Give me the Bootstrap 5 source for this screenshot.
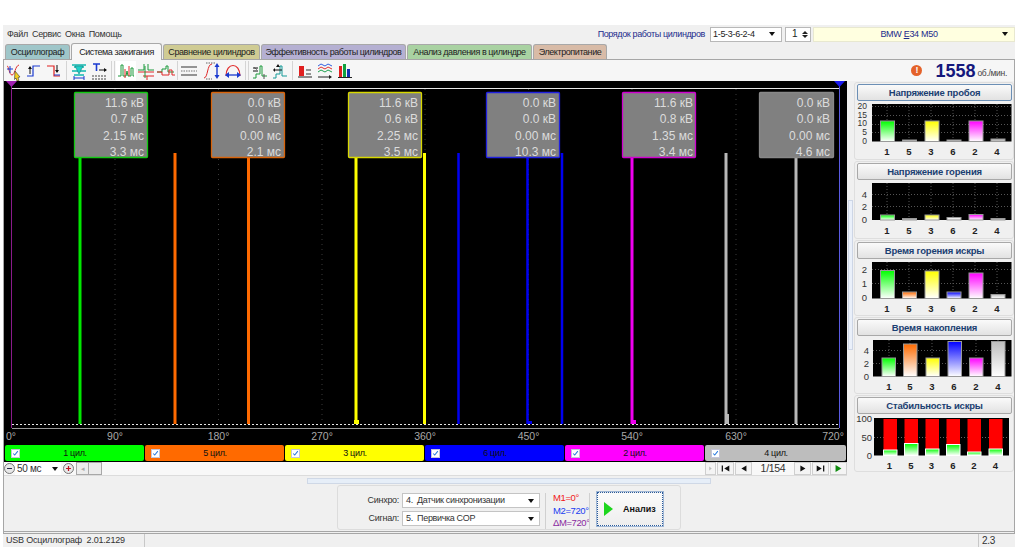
<!DOCTYPE html>
<html lang="ru">
<head>
<meta charset="utf-8">
<title>USB Осциллограф</title>
<link href="https://cdn.jsdelivr.net/npm/bootstrap@5.3.0/dist/css/bootstrap.min.css" rel="stylesheet">
<style>
html,body{height:551px;overflow:hidden;background:#fff}
body{font-family:"Liberation Sans",Arial,sans-serif;font-size:9px;letter-spacing:-.3px;line-height:1;color:#333;padding:25px 9px 0 3px}
.app{width:1012px;height:522px;background:#f0f0f0}
.menu-row{height:18px;padding-left:4px}
.menu-row .mi{margin-right:4px;color:#333}
.order-label{color:#1c2c8c;margin-right:5px;letter-spacing:-.38px}
.sel{height:15px;background:#fff;border:1px solid #b8b8b8;color:#222;padding:0 2px;position:relative}
.tri{width:0;height:0;border-left:3.5px solid transparent;border-right:3.5px solid transparent;border-top:4px solid #111;flex:none}
.w-order{width:72px;margin-right:3px}
.w-spin{width:26px;margin-right:2px;padding-left:6px;font-size:10px}
.w-car{width:202px;background:#ffffe0;border-color:#e8e8d0;color:#1c2c8c}
.spin-arrows{line-height:0;gap:1px}
.up{width:0;height:0;border-left:3px solid transparent;border-right:3px solid transparent;border-bottom:3px solid #222}
.dn{width:0;height:0;border-left:3px solid transparent;border-right:3px solid transparent;border-top:3px solid #222}
.tabs{height:16px;padding-left:2px;gap:1px;align-items:flex-end}
.tabx{height:15px;border:1px solid #a8a8a8;border-bottom:0;border-radius:3px 3px 0 0;color:#222;padding-top:3px;text-align:center;white-space:nowrap;letter-spacing:-.42px}
.t1{width:65px;background:#9fc6c9}.t2{width:91px;height:17px;background:#f7f7f7;padding-top:4px;margin-bottom:-1px;position:relative;z-index:2}
.t3{width:97px;background:#cfcb93}.t4{width:145px;background:#b5b0d2}.t5{width:125px;background:#a9d2a2}.t6{width:74px;background:#d8bba7}
.frame{width:1012px;height:475px;border:1px solid #a6a6a6;border-bottom:3px double #a6a6a6;background:#f0f0f0}
.toolbar{height:21px;background:#f6f6f6}
.tb{width:20px;height:20px;flex:none;display:block}
.tb.on{background:#fff}
.sepa{width:5px;height:19px;flex:none;display:flex;justify-content:center;gap:2px}
.sepa i{width:1px;height:19px;background:#d4d4d4;display:block}
.sepw{width:7px}.sepn{width:3px}
.rpm-mark{width:11px;height:11px;border-radius:50%;background:#e4622a;color:#fff;font-weight:700;font-size:9px;text-align:center;line-height:11px;margin-right:13px}
.rpm-val{font-size:18px;letter-spacing:0;font-weight:700;color:#14187c;margin-right:2px}
.rpm-unit{font-size:8.5px;color:#444;margin-right:7px;padding-top:5px}
.left-col{width:843px;flex:none}
.scope{display:block;width:843px;height:364px;background:#000}
.legend{height:17px;background:#000;padding:0 1px;gap:1px}
.leg{height:16px;border-radius:2px;color:#111;padding-left:6px;align-items:center}
.leg-name{flex:1;text-align:center;padding-right:14px}
.chk{width:9px;height:9px;background:#fff;border:1px solid #c4c4d8;flex:none;display:block}
.c-g{background:#00ff00;width:139px}.c-o{background:#ff6a00;width:139px}.c-y{background:#ffff00;width:139px}
.c-b{background:#0000ff;width:139px}.c-m{background:#ff00ff;width:139px}.c-a{background:#bdbdbd;width:141px}
.ctrl{height:14px;background:#f8f8f8;border-bottom:1px solid #dcdcdc}
.rnd{width:11px;height:11px;border-radius:50%;border:1px solid #777;background:#e8e8e8;display:block;flex:none}
.sel50{width:46px;height:13px;background:#fff;padding:0 3px 0 2px;font-size:10px;margin:0 2px 0 0;color:#333}
.scr{width:26px;height:13px;border:1px solid #a8a8a8;background:#ececec;margin-left:2px}
.scr b{width:12px;border-right:1px solid #a8a8a8;color:#aaa;font-size:7px;font-weight:400;text-align:center;line-height:11px}
.navb{height:13px;width:17px;background:#f4f4f4;border:1px solid #cfcfcf;flex:none;display:block}
.page-no{width:41px;text-align:center;font-size:10.5px;color:#333}
.vsplit{width:5px;height:150px;margin-top:119px;background:#eaf0fa;border:1px solid #cdd6e6;flex:none;margin-left:1px}
.right-col{width:160px;flex:none;margin-left:1px;padding-top:1px}
.gpanel{border:1px solid #dedede;border-radius:3px;padding:1px 1px 0 1px;margin-bottom:1px}
.gbtn{display:block;width:155px;height:17px;margin-left:1px;background:linear-gradient(#fafafa,#e2e2e2);border:1px solid #a8a8a8;border-radius:2px;color:#1b3f72;font-weight:700;font-size:9.5px;letter-spacing:-.2px;text-align:center;line-height:15px}
.gbtn.act{border-color:#6b8fb5}
.gpanel svg{display:block;width:156px}
.gpanel text{letter-spacing:0}
.lower{height:55px}
.hsplit{width:404px;height:6px;margin:2px 0 1px 303px;background:#e6eef8;border:1px solid #cfd8e6}
.box{width:344px;height:45px;margin-left:333px;border:1px solid #dcdcdc;border-radius:3px;padding:7px 0 0 0}
.lbls{width:64px;text-align:right;padding-right:3px;gap:3px;color:#333}
.lbls span{height:15px;line-height:15px}
.sels{width:138px;gap:3px}
.sel2{height:15px;background:#fff;border:1px solid #c4c4c4;padding:0 5px 0 3px;color:#333;letter-spacing:-.35px}
.vs{width:1px;height:36px;background:#d0d0d0;margin:0 7px 0 5px;flex:none}
.marks{width:36px;font-size:9.5px;letter-spacing:-.4px;gap:3px;line-height:9.5px;padding-top:0}
.mk1{color:#f01818}.mk2{color:#1a3cf0}.mk3{color:#8a2aa0}
.an{width:66px;height:34px;margin-left:7px;margin-top:-1px;border:1px dotted #2a5a9a;outline:1px solid #9fb6d4;background:linear-gradient(#fbfbfb,#eeeeee);font-weight:700;font-size:9px;letter-spacing:0;color:#111;padding-left:6px;gap:10px}
.tri-go{width:0;height:0;border-left:9px solid #1ed61e;border-top:7px solid transparent;border-bottom:7px solid transparent;flex:none}
.status{height:13px;color:#333}
.st1{width:141px;padding-left:3px;letter-spacing:-.2px}.st2{width:835px;border-left:1px solid #c8c8c8;border-right:1px solid #c8c8c8;height:13px}.st3{padding-left:3px;font-size:10px}
</style>
</head>
<body>
<div class="app">
  <div class="menu-row d-flex align-items-center">
    <span class="mi">Файл</span><span class="mi">Сервис</span><span class="mi">Окна</span><span class="mi">Помощь</span>
    <div class="ms-auto d-flex align-items-center">
      <span class="order-label">Порядок работы цилиндров</span>
      <div class="sel w-order d-flex align-items-center justify-content-between"><span>1-5-3-6-2-4</span><i class="tri me-1"></i></div>
      <div class="sel w-spin d-flex align-items-center justify-content-between"><span>1</span><span class="spin-arrows d-flex flex-column"><i class="up"></i><i class="dn"></i></span></div>
      <div class="sel w-car d-flex align-items-center justify-content-between"><span class="flex-grow-1 text-center">BMW <u>E</u>34 M50</span><i class="tri me-1"></i></div>
    </div>
  </div>
  <div class="tabs d-flex">
    <div class="tabx t1">Осциллограф</div><div class="tabx t2">Система зажигания</div><div class="tabx t3">Сравнение цилиндров</div><div class="tabx t4">Эффективность работы цилиндров</div><div class="tabx t5">Анализ давления в цилиндре</div><div class="tabx t6">Электропитание</div>
  </div>
  <div class="frame">
    <div class="toolbar d-flex align-items-center">
      <svg class="tb" viewBox="0 0 20 20" fill="none"><path d="M3 5c2 0 2 9 5 9s3-9 7-10" stroke="#e03030"/><path d="M3 8h6M6 5v7" stroke="#1a3ad0"/><path d="M11 10l5 6-2 .5 1 3-2 .5-1-3-1.500 1.500z" fill="#f4d020" stroke="#333" stroke-width=".6"/></svg>
      <svg class="tb" viewBox="0 0 20 20" fill="none"><path d="M3 15h6V5h7" stroke="#1a3ad0" stroke-width="1.200"/><path d="M6 6v7" stroke="#111"/><path d="M4 8l2-3 2 3z" fill="#111"/></svg>
      <svg class="tb" viewBox="0 0 20 20" fill="none"><path d="M3 5h7v10h6" stroke="#e02020" stroke-width="1.200"/><path d="M13 4v7" stroke="#111"/><path d="M11 9l2 3 2-3z" fill="#111"/><path d="M10 14h6" stroke="#1a3ad0"/></svg>
      <div class="sepa"><i></i></div>
      <svg class="tb" viewBox="0 0 20 20" fill="none"><path d="M3 4h14M5 6h10M3 10h14M5 14h10" stroke="#10b8b0" stroke-width="1.300"/><path d="M6 5l4 8 4-8z" fill="#20d0c8" stroke="#108080" stroke-width=".6"/><path d="M5 17h10M5 15v4M15 15v4" stroke="#1a3ad0"/></svg>
      <svg class="tb" viewBox="0 0 20 20" fill="none"><path d="M4 3h7M7.500 3v7" stroke="#1a3ad0" stroke-width="1.600"/><path d="M10 9h7" stroke="#111"/><path d="M15 7l3 2-3 2z" fill="#111"/><path d="M3 15h14M3 18h14" stroke="#444" stroke-dasharray="2 1"/></svg>
      <div class="sepa sepw"><i></i><i></i></div>
      <svg class="tb on" viewBox="0 0 20 20" fill="none"><path d="M2 15h3V4h2v11h3l1-5 1 5h3V7h2v8h1" stroke="#1d9a3c"/><path d="M9 8v9M13 5v10" stroke="#e02828"/></svg>
      <svg class="tb" viewBox="0 0 20 20" fill="none"><path d="M2 9h6V3M12 3v6h6" stroke="#1d9a3c"/><path d="M2 11h16" stroke="#e02828"/><path d="M7 15h4v4M11 15h7" stroke="#e02828"/><path d="M9 5v12" stroke="#1d9a3c"/></svg>
      <svg class="tb" viewBox="0 0 20 20" fill="none"><path d="M1 11h5V8h4V5h2v6h6" stroke="#1d9a3c"/><path d="M1 11h5v3h7V9h3v5h3" stroke="#e02828"/></svg>
      <div class="sepa sepn"><i></i></div>
      <svg class="tb" viewBox="0 0 20 20" fill="none"><path d="M2 6h16M2 14h16" stroke="#333"/><path d="M2 10h16" stroke="#777" stroke-dasharray="1.500 1"/></svg>
      <svg class="tb ms-1" viewBox="0 0 20 20" fill="none"><path d="M1 17c4 0 3-14 8-14" stroke="#e02828"/><path d="M3 2h10M3 18h6" stroke="#666" stroke-dasharray="1.500 1"/><path d="M14 4v12" stroke="#1a3ad0" stroke-width="1.400"/><path d="M11.500 6L14 2l2.500 4zM11.500 14l2.500 4 2.500-4z" fill="#1a3ad0"/></svg>
      <svg class="tb" viewBox="0 0 20 20" fill="none"><path d="M3 15c0-14 14-14 14 0" stroke="#e02828" stroke-width="1.200"/><path d="M4 14h12" stroke="#1a3ad0" stroke-width="1.300"/><path d="M6 11l-4 3 4 3zM14 11l4 3-4 3z" fill="#1a3ad0"/></svg>
      <div class="sepa sepw"><i></i><i></i></div>
      <svg class="tb" viewBox="0 0 20 20" fill="none"><path d="M3 17h3v-4h4V5h2v10h5" stroke="#1d9a3c"/><path d="M3 7h5M3 10h5" stroke="#111"/><path d="M7 8.500l-3-2M14 13v5" stroke="#555"/></svg>
      <svg class="tb" viewBox="0 0 20 20" fill="none"><path d="M3 17h3v-4h4V5h2v10h5" stroke="#159a98"/><path d="M5 9h7" stroke="#111"/><path d="M8 3l2 3H6zM5 7l-2 2 2 2z" fill="#111"/></svg>
      <div class="sepa"><i></i></div>
      <svg class="tb" viewBox="0 0 20 20"><rect x="4" y="5" width="5" height="10" fill="#e02020"/><path d="M3 16h14" stroke="#222"/><path d="M11 9h5M11 13h5" stroke="#333"/></svg>
      <svg class="tb" viewBox="0 0 20 20" fill="none"><path d="M3 5l3-2 4 2 3-2 4 2" stroke="#3060e0"/><path d="M3 8l3-2 4 2 3-2 4 2" stroke="#e03030"/><path d="M3 11l3-2 4 2 3-2 4 2" stroke="#20a050"/><path d="M3 16h13" stroke="#222"/><path d="M14 14l3 2-3 2z" fill="#222"/></svg>
      <svg class="tb" viewBox="0 0 20 20"><rect x="4" y="5" width="3" height="11" fill="#e02020"/><rect x="8" y="3" width="3" height="13" fill="#10a040"/><rect x="12" y="8" width="3" height="8" fill="#1030b0"/><path d="M3 16.500h14" stroke="#222"/></svg>
      <div class="ms-auto d-flex align-items-center">
        <span class="rpm-mark">!</span><span class="rpm-val">1558</span><span class="rpm-unit">об./мин.</span>
      </div>
    </div>
    <div class="d-flex" style="height:395px">
      <div class="left-col">
        <svg class="scope" viewBox="4 81 843 364" font-family="'Liberation Sans',Arial,sans-serif" letter-spacing="0">
          <g stroke="#3a3a3a" stroke-dasharray="1 4"><path d="M115 89V424M218.500 89V424M322 89V424M425 89V424M528.500 89V424M632 89V424M736 89V424"/></g>
          <path d="M12 88.500H839" stroke="#e8e8e8"/>
          <path d="M12 424.500H839" stroke="#e8e8e8" stroke-dasharray="2 2"/>
          <path d="M12 428.500H839" stroke="#9a9a9a"/>
          <path d="M11.500 84V428" stroke="#8a1a8a"/>
          <path d="M839.500 84V428" stroke="#5a5ae0"/>
          <path d="M6 81H17L11.500 87Z" fill="#a020b0"/>
          <path d="M834 81H845L839.500 87Z" fill="#1a1af0"/>
          <g stroke-width="3">
            <path d="M80 158V424" stroke="#00e600"/>
            <path d="M175 153V424M248.500 158V424" stroke="#ff6a00"/>
            <path d="M356 158V424M424.500 153V424" stroke="#ffff00"/>
            <path d="M458.500 153V424M527.500 158V424M562 153V424" stroke="#0000f0" stroke-width="2.500"/>
            <path d="M632 158V424" stroke="#f000f0"/>
            <path d="M726 153V424M796 158V424" stroke="#b8b8b8"/>
          </g>
          <path d="M631 420h5v4h-5z" fill="#f000f0"/><path d="M354 420h5v4h-5z" fill="#ffff00"/><path d="M527 421h5v3h-5z" fill="#0000f0"/><path d="M726 414h3v10h-3z" fill="#b8b8b8"/>
          <g stroke-width="1.300" fill="#808080">
            <rect x="74.500" y="92.500" width="73" height="65" rx="1" stroke="#12c812"/>
            <rect x="211.500" y="92.500" width="73" height="65" rx="1" stroke="#d8640c"/>
            <rect x="348.500" y="92.500" width="73" height="65" rx="1" stroke="#d8d800"/>
            <rect x="486.500" y="92.500" width="73" height="65" rx="1" stroke="#2020e0"/>
            <rect x="622.500" y="92.500" width="73" height="65" rx="1" stroke="#d000d0"/>
            <rect x="759.500" y="92.500" width="74" height="65" rx="1" stroke="#888"/>
          </g>
          <g fill="#dcdcdc" font-size="12" text-anchor="end">
            <text x="144" y="107">11.6 кВ</text><text x="144" y="123">0.7 кВ</text><text x="144" y="140">2.15 мс</text><text x="144" y="156">3.3 мс</text>
            <text x="281" y="107">0.0 кВ</text><text x="281" y="123">0.0 кВ</text><text x="281" y="140">0.00 мс</text><text x="281" y="156">2.1 мс</text>
            <text x="418" y="107">11.6 кВ</text><text x="418" y="123">0.6 кВ</text><text x="418" y="140">2.25 мс</text><text x="418" y="156">3.5 мс</text>
            <text x="556" y="107">0.0 кВ</text><text x="556" y="123">0.0 кВ</text><text x="556" y="140">0.00 мс</text><text x="556" y="156">10.3 мс</text>
            <text x="693" y="107">11.6 кВ</text><text x="693" y="123">0.8 кВ</text><text x="693" y="140">1.35 мс</text><text x="693" y="156">3.4 мс</text>
            <text x="830" y="107">0.0 кВ</text><text x="830" y="123">0.0 кВ</text><text x="830" y="140">0.00 мс</text><text x="830" y="156">4.6 мс</text>
          </g>
          <g fill="#a8a8a8" font-size="10.500" text-anchor="middle">
            <text x="11" y="440">0°</text><text x="115" y="440">90°</text><text x="218.500" y="440">180°</text><text x="322" y="440">270°</text><text x="425" y="440">360°</text><text x="528.500" y="440">450°</text><text x="632" y="440">540°</text><text x="736" y="440">630°</text><text x="833" y="440">720°</text>
          </g>
        </svg>
        <div class="legend d-flex">
          <div class="leg c-g d-flex"><svg class="chk" viewBox="0 0 9 9" fill="none"><path d="M1.500 4.500l2 2 4-5" stroke="#2a7ae0" stroke-width="1.300"/></svg><span class="leg-name">1 цил.</span></div>
          <div class="leg c-o d-flex"><svg class="chk" viewBox="0 0 9 9" fill="none"><path d="M1.500 4.500l2 2 4-5" stroke="#2a7ae0" stroke-width="1.300"/></svg><span class="leg-name">5 цил.</span></div>
          <div class="leg c-y d-flex"><svg class="chk" viewBox="0 0 9 9" fill="none"><path d="M1.500 4.500l2 2 4-5" stroke="#2a7ae0" stroke-width="1.300"/></svg><span class="leg-name">3 цил.</span></div>
          <div class="leg c-b d-flex"><svg class="chk" viewBox="0 0 9 9" fill="none"><path d="M1.500 4.500l2 2 4-5" stroke="#2a7ae0" stroke-width="1.300"/></svg><span class="leg-name">6 цил.</span></div>
          <div class="leg c-m d-flex"><svg class="chk" viewBox="0 0 9 9" fill="none"><path d="M1.500 4.500l2 2 4-5" stroke="#2a7ae0" stroke-width="1.300"/></svg><span class="leg-name">2 цил.</span></div>
          <div class="leg c-a d-flex"><svg class="chk" viewBox="0 0 9 9" fill="none"><path d="M1.500 4.500l2 2 4-5" stroke="#2a7ae0" stroke-width="1.300"/></svg><span class="leg-name">4 цил.</span></div>
        </div>
        <div class="ctrl d-flex align-items-center">
          <svg class="rnd" viewBox="0 0 11 11"><path d="M2.500 5.500h6" stroke="#224" stroke-width="1.500"/></svg>
          <div class="sel50 d-flex align-items-center justify-content-between"><span>50 мс</span><i class="tri"></i></div>
          <svg class="rnd" viewBox="0 0 11 11"><path d="M2.500 5.500h6M5.500 2.500v6" stroke="#c01020" stroke-width="1.500"/></svg>
          <div class="scr d-flex"><b>◂</b></div>
          <div class="ms-auto d-flex align-items-center" style="width:142px;gap:1px">
            <svg class="navb" style="width:11px" viewBox="0 0 11 13"><path d="M4 4l3 2.500-3 2.500z" fill="#bbb"/></svg>
            <svg class="navb" viewBox="0 0 17 13"><path d="M4 3h1.500v7H4zM13 3v7l-6-3.500z" fill="#111"/></svg>
            <svg class="navb" viewBox="0 0 17 13"><path d="M12 3v7l-6-3.500z" fill="#111"/></svg>
            <span class="page-no">1/154</span>
            <svg class="navb" viewBox="0 0 17 13"><path d="M6 3v7l6-3.500z" fill="#111"/></svg>
            <svg class="navb" viewBox="0 0 17 13"><path d="M4 3v7l6-3.500zM11.500 3H13v7h-1.500z" fill="#111"/></svg>
            <svg class="navb" viewBox="0 0 17 13"><path d="M5 2.500v8l7-4z" fill="#0e8a0e"/></svg>
          </div>
        </div>
      </div>
      <div class="vsplit"></div>
      <div class="right-col">
        <div class="gpanel">
          <div class="gbtn act">Напряжение пробоя</div>
          <svg viewBox="855 101 156 58" style="height:58px" font-family="'Liberation Sans',Arial,sans-serif">
            <defs>
              <linearGradient id="gg" x1="0" y1="0" x2="0" y2="1"><stop offset="0" stop-color="#00ff00"/><stop offset="1" stop-color="#fff"/></linearGradient>
              <linearGradient id="go" x1="0" y1="0" x2="0" y2="1"><stop offset="0" stop-color="#ff6a00"/><stop offset="1" stop-color="#fff"/></linearGradient>
              <linearGradient id="gy" x1="0" y1="0" x2="0" y2="1"><stop offset="0" stop-color="#ffff00"/><stop offset="1" stop-color="#fff"/></linearGradient>
              <linearGradient id="gb" x1="0" y1="0" x2="0" y2="1"><stop offset="0" stop-color="#0000ff"/><stop offset="1" stop-color="#fff"/></linearGradient>
              <linearGradient id="gm" x1="0" y1="0" x2="0" y2="1"><stop offset="0" stop-color="#ff00ff"/><stop offset="1" stop-color="#fff"/></linearGradient>
              <linearGradient id="ga" x1="0" y1="0" x2="0" y2="1"><stop offset="0" stop-color="#bdbdbd"/><stop offset="1" stop-color="#fff"/></linearGradient>
            </defs>
            <rect x="871" y="104" width="139.500" height="37.500" fill="#000"/>
            <path d="M871 106.500H1010M871 115.500H1010M871 124.500H1010M871 132.500H1010M886 104V141M908 104V141M930 104V141M952 104V141M974 104V141M996 104V141" stroke="#555" stroke-dasharray="1 2"/>
            <g stroke="#999"><rect x="879.500" y="121" width="14" height="20.500" fill="url(#gg)"/><rect x="901.500" y="140" width="14" height="1.500" fill="#bbb"/><rect x="924" y="121" width="14" height="20.500" fill="url(#gy)"/><rect x="946" y="140" width="14" height="1.500" fill="#bbb"/><rect x="968" y="121" width="14" height="20.500" fill="url(#gm)"/><rect x="990" y="139" width="14" height="2.500" fill="#bbb"/></g>
            <g fill="#333" font-size="8.500" text-anchor="end"><text x="866" y="109">20</text><text x="866" y="117.500">15</text><text x="866" y="126">10</text><text x="866" y="134.500">5</text><text x="866" y="143.500">0</text></g>
            <g fill="#222" font-size="9.500" font-weight="700" text-anchor="middle"><text x="886" y="155">1</text><text x="908" y="155">5</text><text x="930" y="155">3</text><text x="952" y="155">6</text><text x="974" y="155">2</text><text x="996" y="155">4</text></g>
          </svg>
        </div>
        <div class="gpanel">
          <div class="gbtn">Напряжение горения</div>
          <svg viewBox="855 180 156 58" style="height:58px" font-family="'Liberation Sans',Arial,sans-serif">
            <rect x="871" y="183" width="139.500" height="37" fill="#000"/>
            <path d="M871 194.500H1010M871 206.500H1010M886 183V220M908 183V220M930 183V220M952 183V220M974 183V220M996 183V220" stroke="#555" stroke-dasharray="1 2"/>
            <g stroke="#999"><rect x="879.500" y="215" width="14" height="5" fill="url(#gg)"/><rect x="901.500" y="218.500" width="14" height="1.500" fill="#bbb"/><rect x="924" y="215" width="14" height="5" fill="url(#gy)"/><rect x="946" y="217.500" width="14" height="2.500" fill="#eee"/><rect x="968" y="214.500" width="14" height="5.500" fill="url(#gm)"/><rect x="990" y="218.500" width="14" height="1.500" fill="#bbb"/></g>
            <g fill="#333" font-size="9.500" text-anchor="end"><text x="866" y="197.500">4</text><text x="866" y="210">2</text><text x="866" y="223">0</text></g>
            <g fill="#222" font-size="9.500" font-weight="700" text-anchor="middle"><text x="886" y="234">1</text><text x="908" y="234">5</text><text x="930" y="234">3</text><text x="952" y="234">6</text><text x="974" y="234">2</text><text x="996" y="234">4</text></g>
          </svg>
        </div>
        <div class="gpanel">
          <div class="gbtn">Время горения искры</div>
          <svg viewBox="855 259 156 56" style="height:56px" font-family="'Liberation Sans',Arial,sans-serif">
            <rect x="871" y="262" width="139.500" height="36.500" fill="#000"/>
            <path d="M871 269.500H1010M871 283.500H1010M886 262V298M908 262V298M930 262V298M952 262V298M974 262V298M996 262V298" stroke="#555" stroke-dasharray="1 2"/>
            <g stroke="#999"><rect x="879.500" y="270.500" width="14" height="28" fill="url(#gg)"/><rect x="901.500" y="292" width="14" height="6.500" fill="url(#go)"/><rect x="924" y="271" width="14" height="27.500" fill="url(#gy)"/><rect x="946" y="292" width="14" height="6.500" fill="url(#gb)"/><rect x="968" y="273" width="14" height="25.500" fill="url(#gm)"/><rect x="990" y="294.500" width="14" height="4" fill="url(#ga)"/></g>
            <g fill="#333" font-size="9.500" text-anchor="end"><text x="866" y="273">2</text><text x="866" y="287">1</text><text x="866" y="301">0</text></g>
            <g fill="#222" font-size="9.500" font-weight="700" text-anchor="middle"><text x="886" y="312">1</text><text x="908" y="312">5</text><text x="930" y="312">3</text><text x="952" y="312">6</text><text x="974" y="312">2</text><text x="996" y="312">4</text></g>
          </svg>
        </div>
        <div class="gpanel">
          <div class="gbtn">Время накопления</div>
          <svg viewBox="855 336 156 57" style="height:57px" font-family="'Liberation Sans',Arial,sans-serif">
            <rect x="872" y="340" width="138.500" height="36.500" fill="#000"/>
            <path d="M872 350.500H1010M872 363.500H1010M888 340V376M909 340V376M931 340V376M953 340V376M975 340V376M997 340V376" stroke="#555" stroke-dasharray="1 2"/>
            <g stroke="#999"><rect x="881" y="358" width="13.500" height="18.500" fill="url(#gg)"/><rect x="902.500" y="344" width="13.500" height="32.500" fill="url(#go)"/><rect x="925" y="358" width="13.500" height="18.500" fill="url(#gy)"/><rect x="947" y="341.500" width="13.500" height="35" fill="url(#gb)"/><rect x="968.500" y="358" width="13.500" height="18.500" fill="url(#gm)"/><rect x="990.500" y="341.500" width="13.500" height="35" fill="url(#ga)"/></g>
            <g fill="#333" font-size="9.500" text-anchor="end"><text x="868" y="353.500">4</text><text x="868" y="366.500">2</text><text x="868" y="379.500">0</text></g>
            <g fill="#222" font-size="9.500" font-weight="700" text-anchor="middle"><text x="888" y="390">1</text><text x="909" y="390">5</text><text x="931" y="390">3</text><text x="953" y="390">6</text><text x="975" y="390">2</text><text x="997" y="390">4</text></g>
          </svg>
        </div>
        <div class="gpanel">
          <div class="gbtn">Стабильность искры</div>
          <svg viewBox="855 414 156 57" style="height:57px" font-family="'Liberation Sans',Arial,sans-serif">
            <rect x="873" y="418" width="135" height="37.500" fill="#000"/>
            <path d="M873 437.500H1008" stroke="#666" stroke-dasharray="1 2"/>
            <g fill="#ff0000"><rect x="882.500" y="419" width="13.500" height="36"/><rect x="903.500" y="419" width="13.500" height="36"/><rect x="924.500" y="419" width="13.500" height="36"/><rect x="945.500" y="419" width="13.500" height="36"/><rect x="966.500" y="419" width="13.500" height="36"/><rect x="988" y="419" width="13.500" height="36"/></g>
            <g stroke="#fff" fill="url(#gg)"><rect x="882.500" y="450" width="13.500" height="5.500"/><rect x="903.500" y="443.500" width="13.500" height="12"/><rect x="924.500" y="449" width="13.500" height="6.500"/><rect x="945.500" y="444.500" width="13.500" height="11"/><rect x="966.500" y="452" width="13.500" height="3.500"/><rect x="988" y="449" width="13.500" height="6.500"/></g>
            <g fill="#333" font-size="9.500" text-anchor="end"><text x="871" y="422">100</text><text x="871" y="441">50</text><text x="871" y="459">0</text></g>
            <g fill="#222" font-size="9.500" font-weight="700" text-anchor="middle"><text x="888.500" y="469">1</text><text x="910" y="469">5</text><text x="930.500" y="469">3</text><text x="952" y="469">6</text><text x="973" y="469">2</text><text x="994.500" y="469">4</text></g>
          </svg>
        </div>
      </div>
    </div>
    <div class="lower">
      <div class="hsplit"></div>
      <div class="box d-flex">
        <div class="lbls d-flex flex-column"><span>Синхро:</span><span>Сигнал:</span></div>
        <div class="sels d-flex flex-column">
          <div class="sel2 d-flex align-items-center justify-content-between"><span>4.&nbsp; Датчик синхронизации</span><i class="tri"></i></div>
          <div class="sel2 d-flex align-items-center justify-content-between"><span>5.&nbsp; Первичка COP</span><i class="tri"></i></div>
        </div>
        <div class="vs"></div>
        <div class="marks d-flex flex-column"><span class="mk1">M1=0°</span><span class="mk2">M2=720°</span><span class="mk3">ΔM=720°</span></div>
        <div class="vs m-0"></div>
        <div class="an d-flex align-items-center"><i class="tri-go"></i><span>Анализ</span></div>
      </div>
    </div>
  </div>
  <div class="status d-flex align-items-center">
    <div class="st1">USB Осциллограф&nbsp; 2.01.2129</div><div class="st2"></div><div class="st3">2.3</div>
  </div>
</div>
</body>
</html>
